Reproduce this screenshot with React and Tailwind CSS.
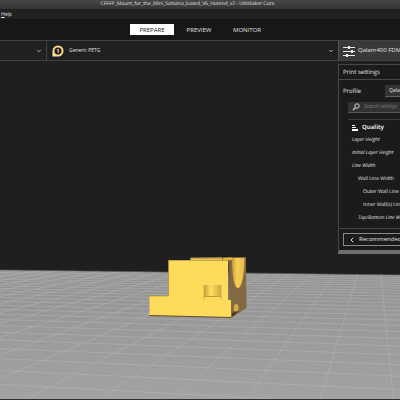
import React from 'react';
import { ChevronDown, ChevronLeft } from 'lucide-react';

const STAGES = ['PREPARE', 'PREVIEW', 'MONITOR'];

const SETTINGS = [
  { name: 'Layer Height', style: 'pl-2 italic' },
  { name: 'Initial Layer Height', style: 'pl-2 italic' },
  { name: 'Line Width', style: 'pl-2 italic' },
  { name: 'Wall Line Width', style: 'pl-3.5' },
  { name: 'Outer Wall Line W', style: 'pl-[19px]' },
  { name: 'Inner Wall(s) Line', style: 'pl-[19px]' },
  { name: 'Top/Bottom Line Widt', style: 'pl-3.5 italic' },
];

// Perspective grid of the build plate, in viewport units
const FAN_LINES = Array.from({ length: 24 }, (_, i) => 0.102 - 0.406 * (i - 3));
const ROW_LINES = Array.from({ length: 27 }, (_, i) => {
  const y = 218 + 1 / (0.00513 + 0.00052 * i);
  const slope = 0.0125 + (y - 272) * 0.00033;
  return [y - 200 * slope, y + 200 * slope];
});

const BuildPlate = () => (
  <svg viewBox="0 268 400 132" className="block w-full" aria-hidden="true">
    <defs>
      <linearGradient id="plate" x1="0" y1="0" x2="0" y2="1">
        <stop offset="0" stopColor="#929292" />
        <stop offset="0.45" stopColor="#9a9a9a" />
        <stop offset="1" stopColor="#a2a2a2" />
      </linearGradient>
      <clipPath id="plateClip">
        <path d="M0 270L400 275V399H0Z" />
      </clipPath>
    </defs>
    <path d="M0 270L400 275V399H0Z" fill="url(#plate)" />
    <g clipPath="url(#plateClip)" stroke="#bababa" strokeWidth="0.8">
      {FAN_LINES.map((s, i) => (
        <line key={i} x1={375 + 50 * s} y1="268" x2={375 + 182 * s} y2="400" strokeOpacity="0.55" />
      ))}
      {ROW_LINES.map(([a, b], i) => (
        <line key={i} x1="0" y1={a} x2="400" y2={b} strokeOpacity="0.55" />
      ))}
    </g>
    <path d="M0 270L400 275" stroke="#536069" strokeWidth="0.7" />
    <path d="M0 399.5H400" stroke="#303030" />
  </svg>
);

const Model = () => (
  <svg viewBox="148 255 102 65" className="block w-full" aria-hidden="true">
    <defs>
      <linearGradient id="bore" x1="0" y1="0" x2="1" y2="0">
        <stop offset="0" stopColor="#c79a3c" />
        <stop offset="0.4" stopColor="#f7cf54" />
        <stop offset="1" stopColor="#e5b84b" />
      </linearGradient>
      <linearGradient id="peg" x1="0" y1="0" x2="1" y2="0">
        <stop offset="0" stopColor="#c99d3b" />
        <stop offset="0.4" stopColor="#ffdf5c" />
        <stop offset="1" stopColor="#d4a943" />
      </linearGradient>
    </defs>
    <path d="M190 257.5L246 257L246.500 308L231 318L228 260H190Z" fill="#816940" />
    <path d="M191 258L222 257.5V261H191Z" fill="#edc552" />
    <path d="M191 258H222" stroke="#80683a" strokeWidth="0.7" />
    <path d="M223 258L232 257.5V260L223 261Z" fill="#dfb64a" />
    <path d="M232 258H244.500C244.500 273 242 288 238 288C235 288 232 280 232 258Z" fill="url(#bore)" />
    <path d="M234 311C233 306 235 303 237 304C239 305 239 309 238 311Z" fill="#d6a944" />
    <path d="M232 313L239 311L232 317Z" fill="#45372a" />
    <path d="M168.500 260H228V300L231 300V317.5L149.500 315.500V296H168.500Z" fill="#fddc5b" />
    <path d="M149.500 296H168.500V260.500H228" fill="none" stroke="#a88c45" strokeWidth="0.7" />
    <path d="M149.500 315.500L231 317.500" stroke="#604c2c" />
    <path d="M229 260.500V300" stroke="#604c2c" strokeWidth="0.9" />
    <path d="M204 285H221V296H204Z" fill="url(#peg)" />
    <path d="M204 296.500H221" stroke="#8c7037" strokeWidth="0.6" />
    <path d="M204 285V300M221 285V300" stroke="#c39a40" strokeWidth="0.6" />
  </svg>
);

const SpoolIcon = () => (
  <svg viewBox="0 0 12 12" className="h-3 w-3 shrink-0" aria-hidden="true">
    <path d="M.5 11.500V6A5.500 5.500 0 1 1 6 11.500Z" fill="#f6e4b8" />
    <circle cx="6" cy="6" r="4.300" fill="#d99a22" />
    <circle cx="6" cy="6" r="3.200" fill="#191919" />
    <text x="6" y="8" textAnchor="middle" fontSize="5" fontWeight="700" fill="#fff">1</text>
  </svg>
);

const SlidersIcon = () => (
  <svg viewBox="0 0 12 12" className="h-3 w-3 shrink-0" fill="#e8e8e8" aria-hidden="true">
    <path d="M0 2h12v1H0zM0 6h12v1H0zM0 10h12v1H0z" />
    <path d="M5 1h2v3H5zM8 5h2v3H8zM3 9h2v3H3z" />
  </svg>
);

const SearchIcon = () => (
  <svg viewBox="0 0 8 8" className="h-2 w-2 shrink-0" fill="none" stroke="#e4e4e4" aria-hidden="true">
    <circle cx="5" cy="3" r="2.200" strokeWidth="0.9" />
    <path d="M3.400 4.700L1 7.200" strokeWidth="1.200" />
  </svg>
);

const QualityIcon = () => (
  <svg viewBox="0 0 7 7" className="h-[7px] w-[7px] shrink-0" fill="#fff" aria-hidden="true">
    <path d="M0 1h3v1H0zM0 3h4v1H0zM0 5h6v2H0z" />
  </svg>
);

const App = () => {
  return (
    <div className="relative flex min-h-screen flex-col overflow-hidden bg-[#1f1f1f] font-['Open_Sans','Noto_Sans',sans-serif] text-[5px] text-[#e4e4e4] [text-rendering:geometricPrecision]">
      {/* Window title */}
      <header className="h-[9px] bg-linear-to-b from-[#484848] to-[#343434] pr-[25px] text-center text-[5px] leading-[9px] whitespace-nowrap">
        CFFFP_Mount_for_the_Mini_Satsana_based_V6_Hotend_v2 - UltiMaker Cura
      </header>

      {/* Menu bar */}
      <div className="flex h-2.5 items-center bg-[#212121] pl-px">
        <button type="button" className="text-[5px] leading-[10px]"><span className="underline">H</span>elp</button>
      </div>

      {/* Stage tabs */}
      <nav className="flex h-[21px] items-center justify-center gap-0.5 bg-[#171717]">
        {STAGES.map((stage, i) => (
          <button
            key={stage}
            type="button"
            className={i === 0 ? 'h-[11px] w-11 bg-white text-[6px] leading-[12px] text-[#222]' : 'h-[11px] w-[46px] text-[6px] leading-[12px]'}
          >
            {stage}
          </button>
        ))}
      </nav>

      {/* Configuration bar */}
      <div className="flex h-[21px] border-y border-[#414141] bg-[#202020]">
        <button type="button" aria-label="Printer" className="flex w-[47px] items-center justify-end border-r border-[#414141] pr-1">
          <ChevronDown strokeWidth={3} className="h-[6px] w-[6px]" />
        </button>
        <button type="button" className="flex flex-1 items-center gap-[5px] pr-1 pl-[5px] text-[5px]">
          <SpoolIcon />
          <span>Generic PETG</span>
          <ChevronDown strokeWidth={3} className="ml-auto h-[6px] w-[6px]" />
        </button>
        <button type="button" className="flex w-[62px] items-center gap-[3px] overflow-hidden border-l border-[#555] bg-[#393939] pl-1 text-[6px] whitespace-nowrap">
          <SlidersIcon />
          Qalam400 FDM
        </button>
      </div>

      {/* Print settings */}
      <section className="z-10 mt-[3px] ml-auto w-[62px] overflow-hidden border-t border-b-4 border-l border-[#484848] border-b-[#707070] bg-[#1b1b1b] whitespace-nowrap">
        <h2 className="h-[15px] border-b border-[#484848] pl-1 text-[6px] leading-[15px]">Print settings</h2>
        <div className="flex h-[22px] items-center pl-1">
          <label htmlFor="profile" className="w-[42px] shrink-0 text-[6px]">Profile</label>
          <select id="profile" className="h-3 w-20 shrink-0 appearance-none border-b border-[#606060] bg-[#333] pl-1 text-[5px]">
            <option>Qalam</option>
          </select>
        </div>
        <div className="ml-[9px] flex h-[11px] items-center gap-1 border-b border-[#555] bg-[#333] pl-1">
          <SearchIcon />
          <input aria-label="Search settings" placeholder="Search settings" className="min-w-0 flex-1 text-[5px] italic placeholder:text-[#7e7e7e]" />
        </div>
        <div className="mt-[6px] ml-[9px] border-t border-[#3b3b3b]">
          <h3 className="flex h-[14px] items-center gap-[3px] pl-1 text-[6px] font-bold">
            <QualityIcon />
            Quality
          </h3>
        </div>
        <ul className="pl-[5px]">
          {SETTINGS.map(({ name, style }) => (
            <li key={name} className={`h-[13px] leading-[13px] ${style}`}>{name}</li>
          ))}
        </ul>
        <div className="mt-[3px] border-t border-[#484848] py-[4px] pl-1">
          <button type="button" className="flex h-[13px] w-24 items-center gap-[3px] border border-[#8a8a8a] pl-1 text-[6px]">
            <ChevronLeft strokeWidth={3} className="h-2 w-2" />
            Recommended
          </button>
        </div>
      </section>

      {/* 3D viewport */}
      <div className="absolute inset-x-0 bottom-0">
        <BuildPlate />
      </div>
      <div className="absolute bottom-[20%] left-[37%] w-[25.5%]">
        <Model />
      </div>
    </div>
  );
};

export default App;
